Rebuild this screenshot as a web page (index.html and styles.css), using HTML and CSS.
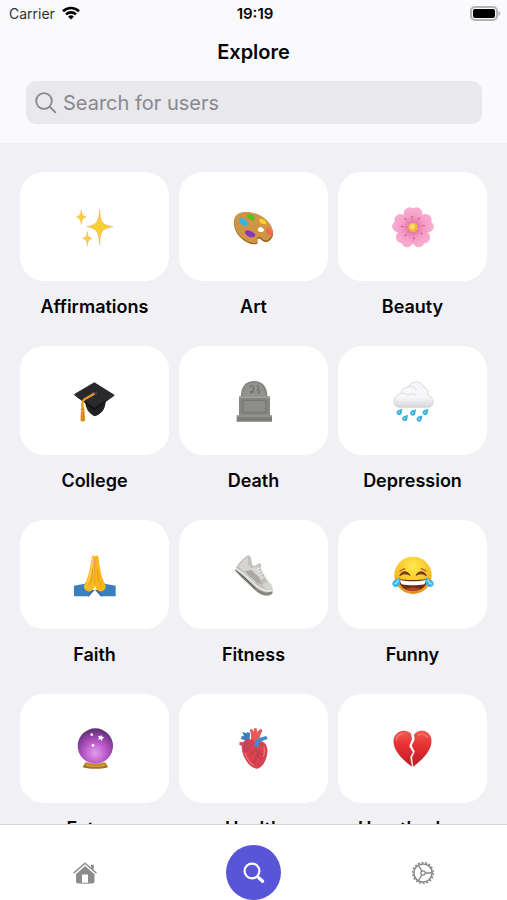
FILE: index.html
```html
<!DOCTYPE html>
<html lang="en">
<head>
    <meta charset="UTF-8">
    <meta name="viewport" content="width=device-width, initial-scale=1.0">
    <title>Explore</title>
    <link rel="stylesheet" href="styles.css">
</head>
<body>
    <header class="header">
        <div class="status-bar">
            <div class="carrier">
                <span>Carrier</span>
                <svg width="18" height="14" viewBox="0 0 18 14" fill="none" stroke="#000" stroke-width="2.6">
                    <path d="M1 5.2a11.5 11.5 0 0 1 16 0"/>
                    <path d="M4 8.4a7.2 7.2 0 0 1 10 0"/>
                    <path d="M9 13.6 6.1 10.7a4.2 4.2 0 0 1 5.8 0z" fill="#000" stroke="none"/>
                </svg>
            </div>
            <time class="clock">19:19</time>
            <svg class="battery" width="31" height="15" viewBox="0 0 31 15">
                <rect x="1" y="1" width="26" height="13" rx="4" fill="#fafafc" stroke="#b4b4b6" stroke-width="2"/>
                <rect x="3" y="3" width="22" height="9" rx="2" fill="#000"/>
                <path d="M28.5 5v5c2.4-.8 2.4-4.2 0-5z" fill="#b4b4b6"/>
            </svg>
        </div>
        <h1>Explore</h1>
        <form class="search" role="search">
            <svg width="22" height="22" viewBox="0 0 22 22" fill="none" stroke="#86868b" stroke-width="1.8" stroke-linecap="round">
                <circle cx="9" cy="9" r="7.8"/>
                <path d="M14.8 14.8 20.4 20.4"/>
            </svg>
            <input type="search" placeholder="Search for users" aria-label="Search for users">
        </form>
    </header>

    <main class="content">
        <div class="grid">
            <a class="category" href="#affirmations">
                <span class="card">
                    <svg class="emoji" viewBox="39 42 132 132">
                        <g fill="#f9cf35" stroke="#eda94b" stroke-width="1.5">
                            <path d="M119 57c2 36 7 45 40 50-34 5-38 15-40 54-3-39-8-49-39-54 31-5 36-16 39-50z"/>
                            <path d="M64 56c1 15 4 18 14 22-10 3-13 8-14 22-2-14-5-19-14-22 9-4 13-8 14-22z"/>
                            <path d="M82 122c1 14 4 17 14 20-10 4-13 8-14 22-1-14-4-18-14-22 10-3 13-7 14-20z"/>
                        </g>
                    </svg>
                </span>
                <span class="name">Affirmations</span>
            </a>
            <a class="category" href="#art">
                <span class="card">
                    <svg class="emoji" viewBox="35 42 132 132">
                        <path d="M43 82c5-17 36-23 68-10 30 12 50 39 47 60-3 15-17 25-27 20-9-5-13-12-18-9-6 4 3 13-4 16-14 5-44-9-58-31-9-14-13-33-8-46zm81 27c-8-3-14 3-12 9 2 7 14 9 18 3 3-5 0-10-6-12z" fill="#9b651e" fill-rule="evenodd"/>
                        <path d="M44 79c7-16 38-21 68-9 29 12 48 38 45 57-3 14-17 25-26 20-8-5-12-12-18-9-7 5 3 14-4 17-14 5-43-9-57-30-9-14-13-33-8-46zm80 30c-8-3-14 3-12 9 2 7 14 9 18 3 3-5 0-10-6-12z" fill="#cf9545" fill-rule="evenodd"/>
                        <path d="M80 70c7-3 21 2 23 9 2 6-2 12-8 9-7-2-18-11-15-18z" fill="#58bf2c"/>
                        <path d="M57 82c8-5 18 4 25 11 5 7 0 13-8 12-12-1-23-17-17-23z" fill="#37b4df"/>
                        <path d="M76 119c8-4 19 2 27 9 5 5 0 11-8 11-12 0-26-13-19-20z" fill="#8933c2"/>
                        <path d="M118 84c8-3 22 7 20 13-3 6-15 2-19-3-2-3-4-7-1-10z" fill="#f7d22e"/>
                        <path d="M140 111c8-1 17 13 18 21-5 5-16 1-19-6-2-6-3-12 1-15z" fill="#f36450"/>
                    </svg>
                </span>
                <span class="name">Art</span>
            </a>
            <a class="category" href="#beauty">
                <span class="card">
                    <svg class="emoji" viewBox="38 42 132 132">
                        <defs>
                            <radialGradient id="petal" cx="104" cy="108" r="65" gradientUnits="userSpaceOnUse">
                                <stop offset="0.15" stop-color="#e777ac"/>
                                <stop offset="0.5" stop-color="#f59dc7"/>
                                <stop offset="1" stop-color="#fbb3d3"/>
                            </radialGradient>
                            <path id="leaf" d="M104 110C88 95 72 76 79 60c5-11 17-13 25-6 9-7 21-4 26 7 5 16-9 34-26 49z"/>
                        </defs>
                        <g fill="url(#petal)" stroke="#ee8dba" stroke-width="1.5">
                            <use href="#leaf"/>
                            <use href="#leaf" transform="rotate(72 104 110)"/>
                            <use href="#leaf" transform="rotate(144 104 110)"/>
                            <use href="#leaf" transform="rotate(216 104 110)"/>
                            <use href="#leaf" transform="rotate(288 104 110)"/>
                        </g>
                        <path d="M104 109 100 78M104 109l17-26M104 109l32-5M104 109l26 18M104 109l3 34M104 109l-23 24M104 109l-34-2M104 109 82 84" stroke="#dd6a9f" stroke-width="1.5"/>
                        <g fill="#9f385d">
                            <circle cx="101" cy="77" r="2"/><circle cx="122" cy="82" r="2"/><circle cx="137" cy="104" r="2"/><circle cx="130" cy="128" r="2"/><circle cx="107" cy="143" r="2"/><circle cx="81" cy="134" r="2"/><circle cx="70" cy="107" r="2"/><circle cx="81" cy="84" r="2"/>
                        </g>
                        <circle cx="104" cy="109" r="14" fill="#efba32"/>
                        <circle cx="102" cy="107" r="8" fill="#fbda6a"/>
                    </svg>
                </span>
                <span class="name">Beauty</span>
            </a>

            <a class="category" href="#college">
                <span class="card">
                    <svg class="emoji" viewBox="39 39 132 132">
                        <path d="M76 105c0 17 4 32 27 46 22-6 34-23 34-46z" fill="#202123"/>
                        <path d="M43 84 103 49l60 37-60 43z" fill="#29292b"/>
                        <path d="M43 84v4l60 44 60-43v-3l-60 40z" fill="#131315"/>
                        <ellipse cx="103" cy="82" rx="9" ry="5" fill="#414144"/>
                        <path d="m103 83-28 16c-8 4-9 11-8 24" fill="none" stroke="#e69a24" stroke-width="7"/>
                        <path d="M64 119h8l4 44c-4 5-12 5-15 0z" fill="#f0a12a"/>
                        <path d="M62 130h12M66 137v28M71 137v28" stroke="#ba6c19" stroke-width="2"/>
                    </svg>
                </span>
                <span class="name">College</span>
            </a>
            <a class="category" href="#death">
                <span class="card">
                    <svg class="emoji" viewBox="514 39 132 132">
                        <path d="M541 95c-2-30 13-50 39-50s42 20 40 50z" fill="#858582"/>
                        <path d="M547 92c-1-25 11-42 33-42s35 17 34 42z" fill="#92928f"/>
                        <path d="M535 91h93v60h-93z" fill="#858582"/>
                        <path d="M535 91h93v5h-93z" fill="#a0a09c"/>
                        <path d="M547 103h69v36h-69z" fill="#8c8c89" stroke="#737370" stroke-width="3"/>
                        <path d="M528 149h106v18H528z" fill="#7d7d7a"/>
                        <path d="M528 148h106v4H528z" fill="#999995"/>
                        <path d="M567 64c4-8 10-6 11 1 2 7-4 12-9 12m19-18c7 1 9 9 1 13 10 0 9 10 1 10m-22 0c7-5 10 0 12-7" fill="none" stroke="#60605e" stroke-width="3"/>
                    </svg>
                </span>
                <span class="name">Death</span>
            </a>
            <a class="category" href="#depression">
                <span class="card">
                    <svg class="emoji" viewBox="38 39 132 132">
                        <defs>
                            <linearGradient id="cloud" x1="0" y1="0" x2="0" y2="1">
                                <stop offset="0.6" stop-color="#f7f7f9"/>
                                <stop offset="1" stop-color="#d5d6da"/>
                            </linearGradient>
                        </defs>
                        <path d="M61 124c-17-3-19-24-6-34 4-4 8-7 13-7 1-15 13-19 24-21 7-18 37-20 45 2 11 3 14 13 12 22 20 9 20 33 3 38z" fill="url(#cloud)" stroke="#c7c8cd" stroke-width="2"/>
                        <path d="M71 83c7-3 14 1 17 6 7-8 22-8 27 2M92 62c12-3 20 4 21 12" fill="none" stroke="#dddde1" stroke-width="3"/>
                        <g fill="#35aee3">
                            <path id="drop" d="M72 128c-2 9 0 19-9 19-9 0-10-9-6-13 4-4 10-3 15-6z"/>
                            <use href="#drop" x="41" y="2"/><use href="#drop" x="78"/>
                            <use href="#drop" x="17" y="18"/><use href="#drop" x="60" y="20"/>
                        </g>
                        <g stroke="#b9e9fa" stroke-width="3" stroke-linecap="round">
                            <path d="m63 137-2 4M104 139l-2 4M141 137l-2 4M80 155l-2 4M123 157l-2 4"/>
                        </g>
                    </svg>
                </span>
                <span class="name">Depression</span>
            </a>

            <a class="category" href="#faith">
                <span class="card">
                    <svg class="emoji" viewBox="39 36 132 132">
                        <path d="M42 134 75 128l23 22-14 16H42zM167 134l-33-6-23 22 14 16h42z" fill="#397fbe"/>
                        <path d="m75 128 7 4c0 12 6 19 17 17l-15 17M134 128l-7 4c0 12-6 19-17 17l15 17" fill="none" stroke="#25669f" stroke-width="4"/>
                        <path d="M95 47c2-5 7-4 9 0v89c-4 15-18 20-28 10-6-6-6-11 0-20 10-22 16-49 19-79z" fill="#fabb21"/>
                        <path d="M115 47c-2-5-8-4-10 0v89c4 15 18 20 28 10 6-6 6-11 0-20-10-22-15-49-18-79z" fill="#fdb51b"/>
                        <path d="M104 47v86M97 84c1 31-4 39-12 49M113 84c-1 31 3 39 12 49" fill="none" stroke="#d4821c" stroke-width="2"/>
                        <path d="M98 48c-1 31-7 57-16 78" fill="none" stroke="#ffdc60" stroke-width="3"/>
                    </svg>
                </span>
                <span class="name">Faith</span>
            </a>
            <a class="category" href="#fitness">
                <span class="card">
                    <svg class="emoji" viewBox="514 36 132 132">
                        <path d="M523 84c2 13 35 38 57 61 17 17 34 23 49 17 8-3 8-10 5-14z" fill="#888782"/>
                        <path d="M526 80c8-12 26-35 38-37 8 2 8 13 10 25 2 9 10 8 17 1 6-5 12 0 10 9-1 10 6 17 13 30 4 15 25 23 21 40-8 10-27 8-42-3-23-16-39-38-67-52z" fill="#c1c0bb"/>
                        <path d="M534 77c8-12 19-25 27-28 3 14-3 23 10 31 8 2 18-2 24-10-3 18 3 29 13 41l-16 16c-21-9-34-30-58-50z" fill="#d6d5d1"/>
                        <path d="m552 91 20-4 23 22 9 20-15-4-24-20z" fill="#aaa9a3"/>
                        <path d="M525 83c31 16 46 39 67 55 14 10 27 14 42 10" fill="none" stroke="#e9e8e5" stroke-width="5"/>
                        <path d="M524 88c30 20 44 40 60 54" fill="none" stroke="#464642" stroke-width="3"/>
                        <path d="m587 86 15-6m-10 13 15-5m-9 13 14-5m-8 14 16-6" stroke="#eeedea" stroke-width="3"/>
                        <path d="M605 131c7-8 16-11 24-5 9 9 7 18 1 20-10 2-19-2-25-15z" fill="#d5d4cf"/>
                    </svg>
                </span>
                <span class="name">Fitness</span>
            </a>
            <a class="category" href="#funny">
                <span class="card">
                    <svg class="emoji" viewBox="38 36 132 132">
                        <defs>
                            <radialGradient id="face" cx="0.5" cy="0.25" r="0.75">
                                <stop offset="0" stop-color="#ffe84b"/>
                                <stop offset="0.65" stop-color="#f9bf27"/>
                                <stop offset="1" stop-color="#e48c16"/>
                            </radialGradient>
                        </defs>
                        <circle cx="104" cy="103" r="56" fill="url(#face)"/>
                        <path d="M62 114c18 4 66 4 84 0 1 24-20 36-42 36s-43-12-42-36z" fill="#692d16"/>
                        <path d="M65 117c20 5 58 5 78 0-1 6-2 9-5 13-20 4-48 4-68 0-3-4-4-7-5-13z" fill="#fff"/>
                        <path d="M82 144c12-6 32-6 44 0-12 7-32 7-44 0z" fill="#b8432c"/>
                        <path d="M64 104c7-16 25-14 31-1-10-6-21-6-31 1zM113 103c6-13 24-15 31 1-10-7-21-7-31-1z" fill="#693817" stroke="#693817" stroke-width="3" stroke-linejoin="round"/>
                        <path d="m65 90 14-7M143 90l-14-7" stroke="#a76619" stroke-width="4" stroke-linecap="round"/>
                        <path d="M64 108c4 14 3 28-10 30-15 1-15-17-4-21 6-3 10-5 14-9zM144 108c-4 14-3 28 10 30 15 1 15-17 4-21-6-3-10-5-14-9z" fill="#36b4ea"/>
                        <path d="M60 116c-3 8-7 12-12 13M148 116c3 8 7 12 12 13" fill="none" stroke="#9de5fb" stroke-width="4"/>
                    </svg>
                </span>
                <span class="name">Funny</span>
            </a>

            <a class="category" href="#future">
                <span class="card">
                    <svg class="emoji" viewBox="39 36 132 132">
                        <defs>
                            <radialGradient id="orb" cx="0.5" cy="0.7" r="0.65">
                                <stop offset="0" stop-color="#e39bed"/>
                                <stop offset="0.55" stop-color="#b450c5"/>
                                <stop offset="1" stop-color="#633279"/>
                            </radialGradient>
                        </defs>
                        <path d="M76 143h60l8 13c-7 7-67 7-76 0z" fill="#a67024"/>
                        <path d="M80 143h53l3 8c-12 6-49 6-59 0z" fill="#e0b04c"/>
                        <circle cx="106" cy="93" r="53" fill="url(#orb)"/>
                        <path d="M77 142c19 8 40 8 58 0l3 6c-20 8-44 8-64 0z" fill="#c28a2d"/>
                        <g fill="#fff">
                            <path d="m123 59 3 6 7 2-6 4-1 7-5-5-7 1 3-6-3-6 7 2z"/>
                            <circle cx="95" cy="59" r="4"/><circle cx="99" cy="91" r="4"/>
                        </g>
                    </svg>
                </span>
                <span class="name">Future</span>
            </a>
            <a class="category" href="#health">
                <span class="card">
                    <svg class="emoji" viewBox="514 36 132 132">
                        <path d="M571 89V61c0-8-2-11-5-16l8-3 5 9 1-11h8l1 12 9-10 8 4-8 16-2 19z" fill="#e65b55"/>
                        <path d="m545 50 12 5 4-4 7 3-1 24 6 12-11 6-9-20-12-5 2-8 7 1z" fill="#3b7fba"/>
                        <path d="M545 83c11-13 31-14 41-1 17-8 29 0 33 15 6 23-9 61-30 64-24-1-53-44-44-78z" fill="#d94350"/>
                        <path d="m537 80 16 3-2 12-15-5z" fill="#cf4f66"/>
                        <path d="M582 97c-3-15 4-24 15-29l19-5 6 8-19 8c-8 4-10 9-8 17z" fill="#438bc7"/>
                        <path d="M547 88c6-9 19-11 29-3-4 14-14 17-21 32-7-8-10-18-8-29z" fill="#c9405f"/>
                        <path d="M585 101c-6 7-7 13-19 18m20-17 5 18 11 15m-8-32 4 15 15 2m-23 0-9 20-10 9" fill="none" stroke="#a33643" stroke-width="2"/>
                        <path d="M553 115c5 16 14 28 25 36M610 96c3 11 1 20-1 27" fill="none" stroke="#ee7472" stroke-width="4" stroke-linecap="round"/>
                    </svg>
                </span>
                <span class="name">Health</span>
            </a>
            <a class="category" href="#heartbroken">
                <span class="card">
                    <svg class="emoji" viewBox="38 36 132 132">
                        <defs>
                            <linearGradient id="heart" x1="0" y1="0" x2="0" y2="1">
                                <stop offset="0" stop-color="#f35a52"/>
                                <stop offset="0.4" stop-color="#e63132"/>
                                <stop offset="1" stop-color="#ba1c25"/>
                            </linearGradient>
                        </defs>
                        <g fill="url(#heart)" stroke="#c42428" stroke-width="1.5">
                            <path d="M97 56C81 41 52 48 47 73c-5 31 26 61 53 81l-5-28 8-14-11-18 8-22z"/>
                            <path d="M108 59c14-19 46-13 50 13 5 31-25 61-53 82l-3-27 8-17-9-18 9-19z"/>
                        </g>
                        <path d="M54 75c1-12 10-18 20-19M120 61c9-7 20-3 27 5" fill="none" stroke="#f77c72" stroke-width="4" stroke-linecap="round"/>
                    </svg>
                </span>
                <span class="name">Heartbroken</span>
            </a>
        </div>
    </main>

    <nav class="tab-bar">
        <a class="tab" href="#home" aria-label="Home">
            <svg width="24" height="22" viewBox="0 0 24 22">
                <path d="m1 10.8 11-9.6 11 9.6" fill="none" stroke="#8c8c8c" stroke-width="1.5" stroke-linecap="round" stroke-linejoin="round"/>
                <path d="M18 2.8h2.8v5L18 5.4z" fill="#8c8c8c"/>
                <path d="m12 4 9.5 8.3v7.2a2 2 0 0 1-2 2H15v-9H9v9H5a2 2 0 0 1-2-2v-7.2z" fill="#8c8c8c"/>
                <path d="M9.7 13.3h4.6v8.2H9.7z" fill="#fff"/>
                <path d="M8.5 21.2h7" stroke="#8c8c8c" stroke-width="1"/>
            </svg>
        </a>
        <a class="tab" href="#explore" aria-label="Explore">
            <span class="tab-active">
                <svg width="22" height="22" viewBox="0 0 22 22" fill="none" stroke="#fff" stroke-linecap="round">
                    <circle cx="9" cy="9" r="7.4" stroke-width="2.2"/>
                    <path d="m14.5 14.5 1.5 1.5" stroke-width="2"/>
                    <path d="m16 16 3.6 3.3" stroke-width="3.2"/>
                </svg>
            </span>
        </a>
        <a class="tab" href="#settings" aria-label="Settings">
            <svg width="24" height="24" viewBox="0 0 24 24" fill="none" stroke="#858585">
                <circle cx="12" cy="12" r="10.4" stroke-width="1.4" stroke-dasharray="2 1.63"/>
                <circle cx="12" cy="12" r="9.1" stroke-width="1.5"/>
                <circle cx="12" cy="12" r="2.2" stroke-width="1.2"/>
                <path d="M14.3 12h7M10.8 10 7.3 4.1M10.8 14l-3.5 5.9" stroke-width="1.3"/>
            </svg>
        </a>
    </nav>
</body>
</html>
```
FILE: styles.css
```css
* {
    box-sizing: border-box;
}
body {
    display: flex;
    flex-direction: column;
    height: 100vh;
    margin: 0;
    overflow: hidden;
    background-color: #f1f0f5;
    color: #050506;
    font-family: Inter, "Liberation Sans", sans-serif;
}
a {
    color: inherit;
    text-decoration: none;
}
.header {
    flex: none;
    padding-bottom: 19px;
    background-color: #fafafc;
}
.status-bar {
    display: grid;
    grid-template-columns: 1fr auto 1fr;
    align-items: center;
    height: 26px;
    padding: 0 6px 0 9px;
    font-size: 14px;
}
.carrier {
    display: flex;
    align-items: center;
    gap: 7px;
    color: #303032;
}
.clock {
    font-size: 15px;
    font-weight: 600;
}
.battery {
    justify-self: end;
}
h1 {
    margin: 0;
    padding: 14px 0 17px;
    font-size: 20px;
    font-weight: 600;
    line-height: 24px;
    text-align: center;
}
.search {
    display: flex;
    align-items: center;
    gap: 6px;
    height: 43px;
    margin: 0 25px 0 26px;
    padding: 0 9px;
    border-radius: 10px;
    background-color: #e9e8ed;
}
.search input {
    flex: 1;
    min-width: 0;
    padding: 0;
    border: none;
    outline: none;
    background: none;
    font-family: inherit;
    font-size: 20px;
}
.search input::placeholder {
    color: #88888d;
}
.content {
    flex: 1;
    min-height: 0;
    padding: 29px 20px 0;
    overflow-x: hidden;
    overflow-y: auto;
    scrollbar-width: none;
}
.grid {
    display: grid;
    grid-template-columns: repeat(3, 1fr);
    gap: 27px 10px;
}
.category {
    display: flex;
    flex-direction: column;
    gap: 14px;
    text-align: center;
}
.card {
    display: flex;
    align-items: center;
    justify-content: center;
    height: 109px;
    border-radius: 24px;
    background-color: #fff;
}
.emoji {
    width: 44px;
    height: 44px;
}
.name {
    font-size: 18px;
    font-weight: 600;
    line-height: 24px;
}
.tab-bar {
    display: grid;
    grid-template-columns: repeat(3, 1fr);
    flex: none;
    height: 76px;
    padding-top: 20px;
    border-top: 1px solid #d5d5d9;
    background-color: #fff;
}
.tab {
    display: flex;
    align-items: center;
    justify-content: center;
}
.tab-active {
    display: flex;
    align-items: center;
    justify-content: center;
    width: 55px;
    height: 55px;
    border-radius: 50%;
    background-color: #5855d6;
}
```
